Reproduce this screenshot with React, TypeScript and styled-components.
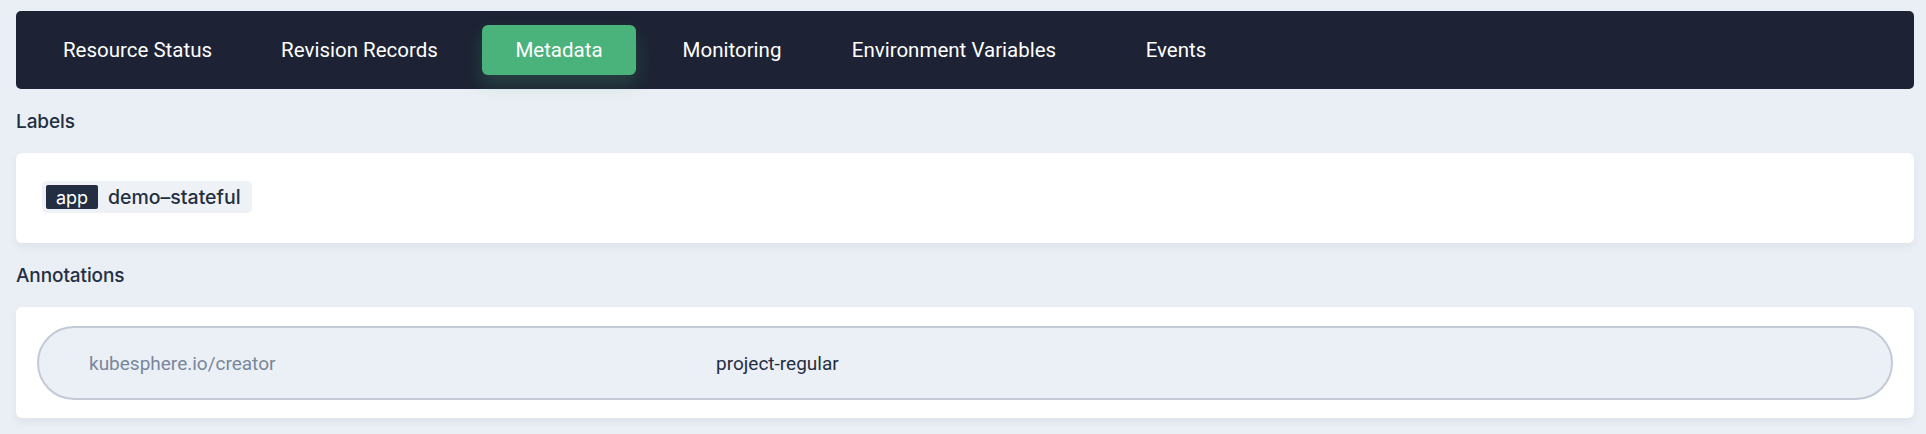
import React from "react";
import styled, { createGlobalStyle } from "styled-components";

const GlobalStyle = createGlobalStyle`
  html, body {
    margin: 0;
    padding: 0;
    background: #eaeff5;
  }
  body {
    font-family: Roboto, "Liberation Sans", Arial, sans-serif;
    color: #242e42;
    -webkit-font-smoothing: antialiased;
  }
`;

const Page = styled.div`
  padding: 11px 12px 16px 16px;
  display: flex;
  flex-direction: column;
`;

const NavBar = styled.nav`
  height: 78px;
  background: #1d2334;
  border-radius: 5px;
  display: flex;
  align-items: center;
  padding-left: 22px;
  box-sizing: border-box;
`;

const Tab = styled.div<{ $w: number; $active?: boolean }>`
  width: ${(p) => p.$w}px;
  height: 50px;
  display: flex;
  align-items: center;
  justify-content: center;
  font-size: 20.5px;
  color: #ffffff;
  border-radius: 6px;
  background: ${(p) => (p.$active ? "#4ab27b" : "transparent")};
  box-shadow: ${(p) =>
    p.$active ? "0 10px 18px rgba(74, 178, 123, 0.22)" : "none"};
  flex-shrink: 0;
`;

const Heading = styled.h3`
  margin: 21px 0 19px;
  height: 24px;
  line-height: 24px;
  font-size: 19px;
  font-weight: 500;
  color: #242e42;
  font-family: Inter, "Noto Sans", sans-serif;
  letter-spacing: -0.1px;
`;

const Card = styled.div<{ $pad: string }>`
  background: #ffffff;
  border-radius: 6px;
  padding: ${(p) => p.$pad};
  box-shadow: 0 4px 8px rgba(36, 46, 66, 0.06);
  display: flex;
  align-items: center;
`;

const Tag = styled.div`
  height: 32px;
  box-sizing: border-box;
  display: inline-flex;
  align-items: center;
  padding: 0 11px 0 4px;
  gap: 10px;
  background: #eef2f7;
  border-radius: 5px;
  font-family: Inter, "Noto Sans", sans-serif;
  font-size: 19.5px;
`;

const TagKey = styled.span`
  width: 52px;
  height: 24px;
  display: flex;
  align-items: center;
  justify-content: center;
  background: #242e42;
  color: #ffffff;
  border-radius: 2px;
  font-size: 18px;
`;

const TagValue = styled.span`
  color: #242e42;
  font-weight: 500;
`;

const Pill = styled.div`
  flex: 1;
  height: 74px;
  box-sizing: border-box;
  border: 2px solid #c3cad6;
  border-radius: 37px;
  background: #ebeff6;
  display: flex;
  align-items: center;
  padding-left: 50px;
  font-size: 19px;
`;

const PillKey = styled.span`
  width: 627px;
  color: #79879c;
  flex-shrink: 0;
`;

const PillValue = styled.span`
  color: #242e42;
`;

const tabs = [
  { label: "Resource Status", w: 199 },
  { label: "Revision Records", w: 245 },
  { label: "Metadata", w: 154, active: true },
  { label: "Monitoring", w: 192 },
  { label: "Environment Variables", w: 252 },
  { label: "Events", w: 192 },
];

export default function App() {
  return (
    <Page>
      <GlobalStyle />
      <NavBar>
        {tabs.map((t) => (
          <Tab key={t.label} $w={t.w} $active={t.active}>
            {t.label}
          </Tab>
        ))}
      </NavBar>
      <Heading>Labels</Heading>
      <Card $pad="28px 26px 30px">
        <Tag>
          <TagKey>app</TagKey>
          <TagValue>demo–stateful</TagValue>
        </Tag>
      </Card>
      <Heading>Annotations</Heading>
      <Card $pad="19px 21px 18px">
        <Pill>
          <PillKey>kubesphere.io/creator</PillKey>
          <PillValue>project-regular</PillValue>
        </Pill>
      </Card>
    </Page>
  );
}
